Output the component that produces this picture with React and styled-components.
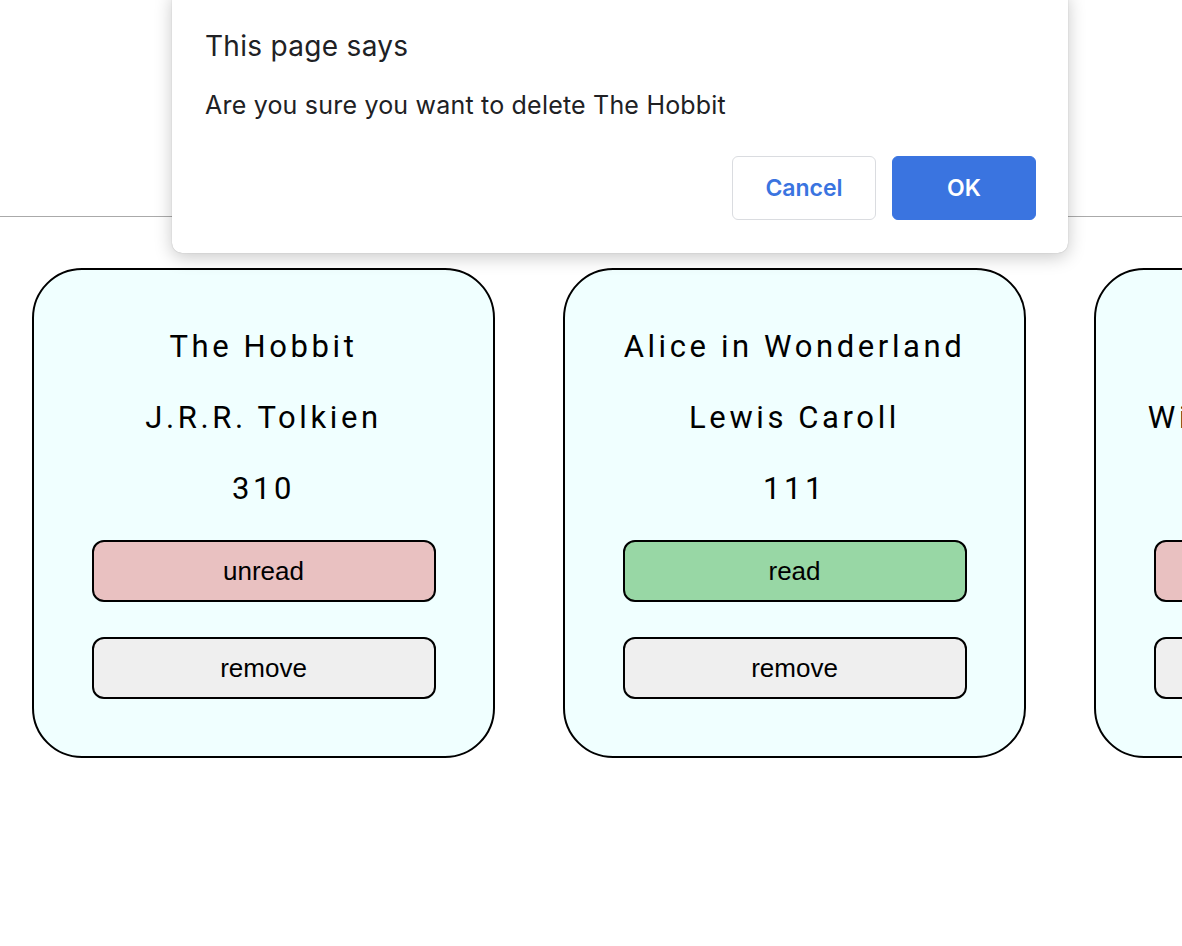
import styled, { createGlobalStyle } from 'styled-components'

const GlobalStyle = createGlobalStyle`
    body {
        margin: 0;
        background: #ffffff;
        font-family: Roboto, "Liberation Sans", sans-serif;
        overflow: hidden;
    }
`

const StyledPage = styled.div`
    position: relative;
    min-height: 946px;
`

const StyledHeader = styled.header`
    height: 216px;
    border-bottom: 1px solid #aaaaaa;
`

const StyledLibrary = styled.main`
    display: flex;
    gap: 68px;
    padding: 51px 32px;
`

const StyledCard = styled.div`
    flex: 0 0 463px;
    box-sizing: border-box;
    height: 490px;
    display: flex;
    flex-direction: column;
    align-items: center;
    padding-top: 59px;
    background: #f0ffff;
    border: 2px solid #000;
    border-radius: 50px;
`

const StyledInfo = styled.p`
    margin: 0 0 36px;
    height: 35px;
    line-height: 35px;
    font-family: Roboto, sans-serif;
    font-size: 31px;
    letter-spacing: 3.6px;
    white-space: nowrap;
    color: #000;
`

const StyledButton = styled.button`
    width: 344px;
    height: 62px;
    margin-top: ${props => props.$top}px;
    border: 2px solid #000;
    border-radius: 12px;
    background: ${props => props.$bg};
    font-family: "Liberation Sans", Arial, sans-serif;
    font-size: 26px;
    color: #000;
`

const StyledDialog = styled.div`
    position: absolute;
    top: -10px;
    left: 172px;
    width: 896px;
    box-sizing: border-box;
    padding: 40px 32px 33px 33px;
    background: #fff;
    border-radius: 10px;
    box-shadow: 0 4px 18px rgba(0, 0, 0, 0.22), 0 0 1px rgba(0, 0, 0, 0.3);
    font-family: Inter, "Noto Sans", sans-serif;
    color: #202124;
`

const StyledDialogTitle = styled.h2`
    margin: 0;
    font-size: 28px;
    font-weight: 400;
    line-height: 32px;
    letter-spacing: 0.3px;
`

const StyledDialogMessage = styled.p`
    margin: 27px 0 0;
    font-size: 25px;
    line-height: 32px;
    letter-spacing: 0.2px;
`

const StyledDialogActions = styled.div`
    display: flex;
    justify-content: flex-end;
    gap: 16px;
    margin-top: 35px;
`

const StyledDialogButton = styled.button`
    width: 144px;
    height: 64px;
    border-radius: 6px;
    font-family: Inter, "Noto Sans", sans-serif;
    font-size: 23px;
    font-weight: 600;
    border: 1px solid ${props => props.$primary ? '#3a74e0' : '#dadce0'};
    background: ${props => props.$primary ? '#3a74e0' : '#fff'};
    color: ${props => props.$primary ? '#fff' : '#3a74e0'};
`

const books = [
    { title: 'The Hobbit', author: 'J.R.R. Tolkien', pages: 310, read: false },
    { title: 'Alice in Wonderland', author: 'Lewis Caroll', pages: 111, read: true },
    { title: 'Hamlet', author: 'William Shakespeare', pages: 342, read: false },
]

function BookCard({ book }) {
    return (
        <StyledCard>
            <StyledInfo>{book.title}</StyledInfo>
            <StyledInfo>{book.author}</StyledInfo>
            <StyledInfo>{book.pages}</StyledInfo>
            <StyledButton $top={-2} $bg={book.read ? '#98d7a5' : '#e9c1c1'}>
                {book.read ? 'read' : 'unread'}
            </StyledButton>
            <StyledButton $top={35} $bg={'#efefef'}>{'remove'}</StyledButton>
        </StyledCard>
    )
}

export default function App() {
    return (
        <StyledPage>
            <GlobalStyle />
            <StyledHeader />
            <StyledLibrary>
                {books.map(book => <BookCard key={book.title} book={book} />)}
            </StyledLibrary>
            <StyledDialog>
                <StyledDialogTitle>{'This page says'}</StyledDialogTitle>
                <StyledDialogMessage>{'Are you sure you want to delete The Hobbit'}</StyledDialogMessage>
                <StyledDialogActions>
                    <StyledDialogButton>{'Cancel'}</StyledDialogButton>
                    <StyledDialogButton $primary>{'OK'}</StyledDialogButton>
                </StyledDialogActions>
            </StyledDialog>
        </StyledPage>
    )
}
